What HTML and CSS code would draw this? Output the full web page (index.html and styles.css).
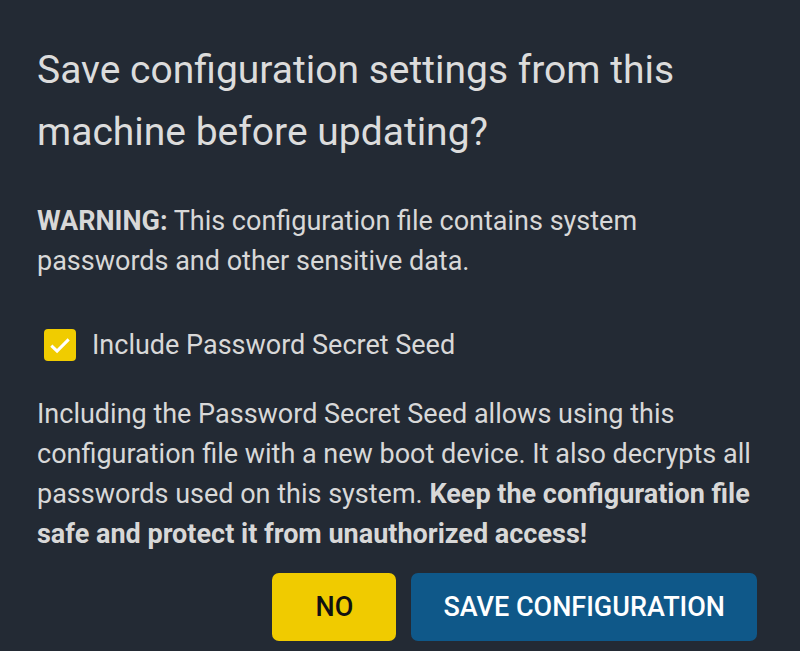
FILE: index.html
```html
<!DOCTYPE html>
<html lang="en">
<head>
<meta charset="utf-8">
<title>Save configuration</title>
<link rel="stylesheet" href="styles.css">
</head>
<body>
<div class="dialog">
  <h1 class="title">Save configuration settings from this machine before updating?</h1>
  <p class="warning"><strong>WARNING:</strong> This configuration file contains system passwords and other sensitive data.</p>
  <label class="check-row">
    <span class="box">
      <svg viewBox="0 0 24 24" width="26" height="26"><path d="M4 12.5 L9.3 17.6 L20 6.8" fill="none" stroke="#ffffff" stroke-width="2.8"/></svg>
    </span>
    <span class="check-label">Include Password Secret Seed</span>
  </label>
  <p class="info">Including the Password Secret Seed allows using this configuration file with a new boot device. It also decrypts all passwords used on this system. <strong>Keep the configuration file safe and protect it from unauthorized access!</strong></p>
  <div class="actions">
    <button class="btn btn-no">NO</button>
    <button class="btn btn-save">SAVE CONFIGURATION</button>
  </div>
</div>
</body>
</html>
```
FILE: styles.css
```css
html, body {
  margin: 0;
  padding: 0;
  background: #232a34;
}
body {
  font-family: Roboto, "Noto Sans", sans-serif;
  color: #d8d8d8;
  font-stretch: 88%;
}
.dialog {
  padding: 39px 43px 0 37px;
}
.title {
  margin: 0;
  font-size: 39px;
  line-height: 62px;
  font-weight: 400;
  color: #dcdcdc;
}
.warning {
  margin: 38px 0 0;
  font-size: 27px;
  line-height: 40px;
}
.warning strong, .info strong {
  font-weight: 700;
}
.check-row {
  display: flex;
  align-items: center;
  height: 32px;
  margin: 48px 0 0 7px;
  gap: 16px;
}
.box {
  width: 32px;
  height: 32px;
  border-radius: 4px;
  background: #f0cc00;
  display: flex;
  align-items: center;
  justify-content: center;
}
.check-label {
  font-size: 27px;
  line-height: 32px;
}
.info {
  margin: 33px 0 0;
  font-size: 27px;
  line-height: 40px;
}
.actions {
  display: flex;
  justify-content: flex-end;
  gap: 15px;
  margin-top: 19px;
}
.btn {
  height: 68px;
  border: none;
  border-radius: 7px;
  font-family: Roboto, "Noto Sans", sans-serif;
  font-stretch: 88%;
  font-size: 27px;
  font-weight: 500;
  padding: 0 32px;
}
.btn-no {
  min-width: 124px;
  background: #f0cb00;
  color: #111111;
}
.btn-save {
  background: #0f5889;
  color: #ffffff;
}
```
